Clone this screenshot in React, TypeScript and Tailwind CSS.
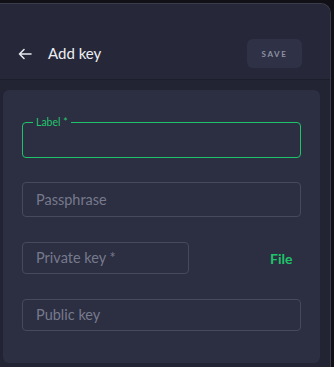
import React from 'react';

const font = { fontFamily: 'Lato, "Open Sans", sans-serif' };

const Field: React.FC<{ placeholder: string; className?: string; h?: string }> = ({ placeholder, className = '', h = 'h-[32px]' }) => (
  <div className={`${h} ${className} flex items-center rounded-[4px] border border-[#474a5c] px-[13px] text-[14.5px] text-[#767a8c]`}>
    {placeholder}
  </div>
);

export default function App() {
  return (
    <div className="w-[334px] h-[367px] bg-[#101016] overflow-hidden" style={font}>
      <div className="mt-[3px] w-[331px] h-[364px] rounded-tr-[10px] border-t border-r border-[#3b3d4a] bg-[#222433] flex flex-col">
        <div className="h-[76px] shrink-0 bg-[#262839] border-b border-[#1c1e2b] rounded-tr-[10px] flex items-end justify-between pl-[18px] pr-[28px] pb-[11px]">
          <div className="flex items-center h-[29px]">
            <svg width="14" height="12" viewBox="0 0 14 12" fill="none" stroke="#e6e7ee" strokeWidth="1.6" strokeLinecap="round" strokeLinejoin="round">
              <path d="M13 6H1.5M6 1.5L1.5 6L6 10.5" />
            </svg>
            <span className="ml-[16px] text-[15px] text-[#eceef4]">Add key</span>
          </div>
          <div className="w-[55px] h-[29px] rounded-[6px] bg-[#2f3146] flex items-center justify-center text-[8px] font-bold tracking-[0.2em] text-[#8d91a2]">
            SAVE
          </div>
        </div>
        <div className="ml-[3px] mt-[10px] w-[317px] h-[273px] rounded-[6px] bg-[#2c2e42] px-[19px] pt-[27px]">
          <fieldset className="h-[41px] rounded-[4px] border border-[#1fc46a] px-[10px] pb-0">
            <legend className="px-[3px] text-[10.5px] leading-[10px] text-[#22c56d]">Label *</legend>
          </fieldset>
          <Field placeholder="Passphrase" h="h-[35px]" className="mt-[24px] w-[279px]" />
          <div className="mt-[25px] flex items-center">
            <Field placeholder="Private key *" className="w-[167px]" />
            <span className="ml-[81px] text-[14px] font-bold text-[#1fc46a]">File</span>
          </div>
          <Field placeholder="Public key" className="mt-[25px] w-[279px]" />
        </div>
      </div>
    </div>
  );
}
